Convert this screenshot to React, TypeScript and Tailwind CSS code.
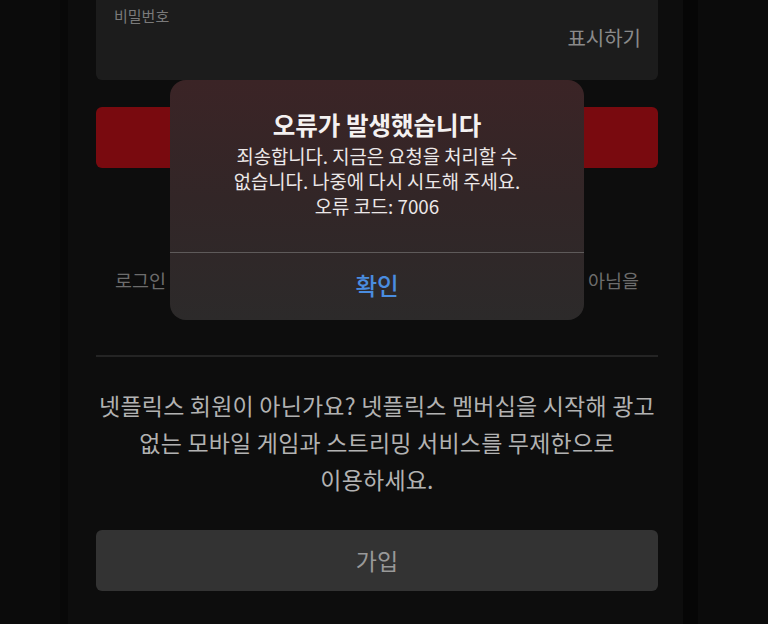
import React from "react";

const font = { fontFamily: '"Noto Sans CJK KR", "Noto Sans", sans-serif' };

function ErrorAlert() {
  return (
    <div className="absolute left-[170px] top-[80px] w-[414px] h-[240px] rounded-[16px] overflow-hidden flex flex-col bg-gradient-to-b from-[#3b2426] via-[#322627] to-[#2c2a2a]">
      <div className="h-[172px] flex flex-col items-center pt-[30px]">
        <div className="text-[24.5px] leading-[30px] font-semibold text-[#f4f1f1]">오류가 발생했습니다</div>
        <div className="mt-[3px] text-[18.8px] leading-[25px] text-[#ece8e8] text-center">
          <div>죄송합니다. 지금은 요청을 처리할 수</div>
          <div>없습니다. 나중에 다시 시도해 주세요.</div>
          <div>오류 코드: 7006</div>
        </div>
      </div>
      <div className="h-px bg-[#5e5a5a]" />
      <div className="flex-1 flex items-center justify-center pb-[2px]">
        <span className="text-[23.5px] font-medium text-[#4a8de0]">확인</span>
      </div>
    </div>
  );
}

export default function App() {
  return (
    <div className="relative w-[768px] h-[624px] overflow-hidden bg-[#0b0b0b] flex" style={font}>
      <div className="w-[60px] bg-[#0b0b0b]" />
      <div className="w-[8px] bg-[#080808]" />
      <div className="w-[615px] bg-[#0d0d0d] pl-[28px] pr-[25px] flex flex-col">
        <div className="h-[80px] rounded-b-[6px] bg-[#1c1c1c] relative px-[18px]">
          <div className="pt-[6px] text-[15px] leading-[20px] text-[#7a7a7a]">비밀번호</div>
          <div className="absolute right-[17px] top-[24px] text-[20px] leading-[28px] text-[#8a8a8a]">표시하기</div>
        </div>
        <div className="mt-[27px] h-[61px] rounded-[6px] bg-[#790a0f]" />
        <div className="mt-[99px] px-[19px] h-[26px] text-[18.5px] leading-[26px] text-[#6c6c6c] whitespace-nowrap overflow-hidden [text-align-last:justify]">
          로그인 시 Google reCAPTCHA를 사용하여 로봇이 아님을
        </div>
        <div className="mt-[62px] h-[2px] bg-[#242424]" />
        <div className="mt-[30px] text-center text-[23px] leading-[37px] text-[#b2b2b2] tracking-[0.2px]">
          <div>넷플릭스 회원이 아닌가요? 넷플릭스 멤버십을 시작해 광고</div>
          <div>없는 모바일 게임과 스트리밍 서비스를 무제한으로</div>
          <div>이용하세요.</div>
        </div>
        <div className="mt-[32px] h-[61px] rounded-[6px] bg-[#333333] flex items-center justify-center">
          <span className="text-[23px] text-[#999999]">가입</span>
        </div>
      </div>
      <div className="w-[15px] bg-[#060606]" />
      <div className="flex-1 bg-[#0b0b0b]" />
      <ErrorAlert />
    </div>
  );
}
